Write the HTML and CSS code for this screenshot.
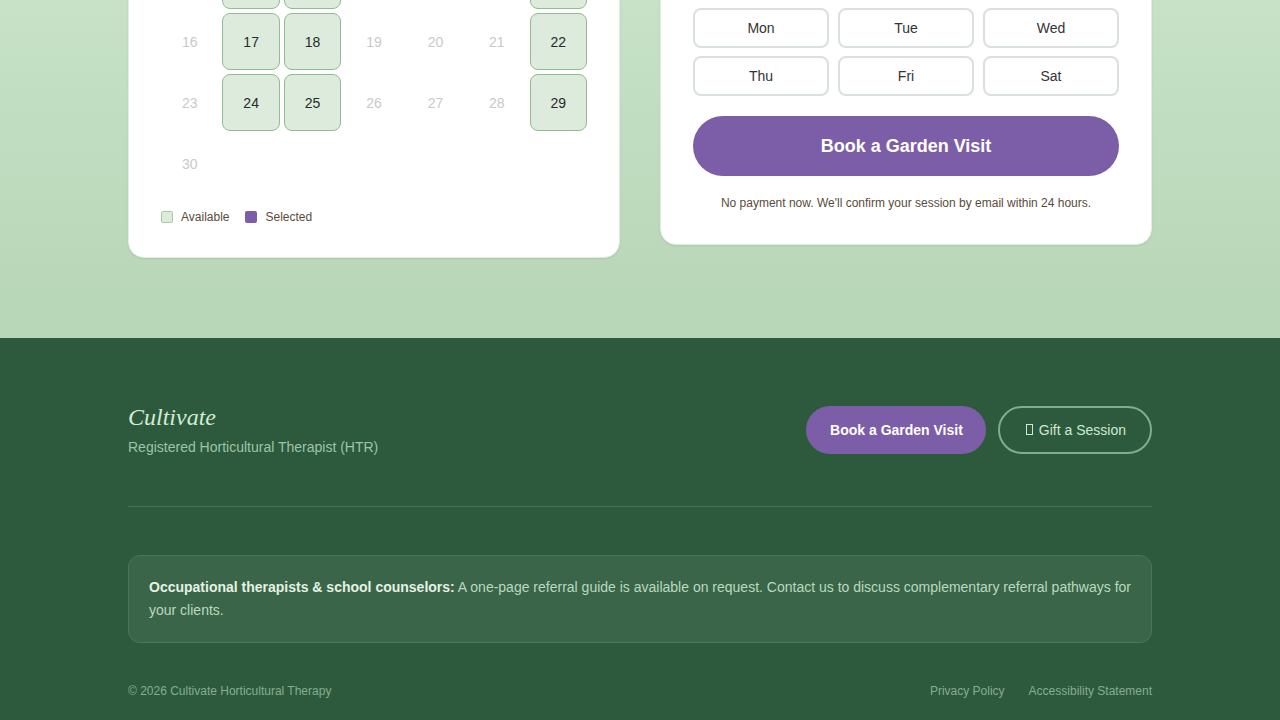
FILE: index.html
```html
<!DOCTYPE html>
<html lang="en">
<head>
<meta charset="utf-8">
<title>Cultivate — Book a Garden Visit</title>
<link rel="stylesheet" href="styles.css">
</head>
<body>
<section class="booking">
  <div class="container booking-grid">
    <div class="card calendar-card">
      <div class="cal-grid">
        <span class="day off"></span>
        <span class="day open"></span>
        <span class="day open"></span>
        <span class="day off"></span>
        <span class="day off"></span>
        <span class="day off"></span>
        <span class="day open"></span>
        <span class="day off">16</span>
        <span class="day open">17</span>
        <span class="day open">18</span>
        <span class="day off">19</span>
        <span class="day off">20</span>
        <span class="day off">21</span>
        <span class="day open">22</span>
        <span class="day off">23</span>
        <span class="day open">24</span>
        <span class="day open">25</span>
        <span class="day off">26</span>
        <span class="day off">27</span>
        <span class="day off">28</span>
        <span class="day open">29</span>
        <span class="day off">30</span>
      </div>
      <div class="legend">
        <span class="legend-item"><i class="swatch swatch-open"></i>Available</span>
        <span class="legend-item"><i class="swatch swatch-selected"></i>Selected</span>
      </div>
    </div>
    <div class="card form-card">
      <div class="weekdays">
        <button class="weekday">Mon</button>
        <button class="weekday">Tue</button>
        <button class="weekday">Wed</button>
        <button class="weekday">Thu</button>
        <button class="weekday">Fri</button>
        <button class="weekday">Sat</button>
      </div>
      <button class="book-btn">Book a Garden Visit</button>
      <p class="note">No payment now. We'll confirm your session by email within 24 hours.</p>
    </div>
  </div>
</section>
<footer class="footer">
  <div class="container">
    <div class="footer-top">
      <div class="brand">
        <div class="brand-name">Cultivate</div>
        <div class="brand-sub">Registered Horticultural Therapist (HTR)</div>
      </div>
      <div class="footer-actions">
        <a class="btn-primary" href="#">Book a Garden Visit</a>
        <a class="btn-outline" href="#"><span class="tofu"></span>Gift a Session</a>
      </div>
    </div>
    <hr class="divider">
    <p class="referral"><strong>Occupational therapists &amp; school counselors:</strong> A one-page referral guide is available on request. Contact us to discuss complementary referral pathways for your clients.</p>
    <div class="footer-bottom">
      <span>© 2026 Cultivate Horticultural Therapy</span>
      <nav class="footer-links">
        <a href="#">Privacy Policy</a>
        <a href="#">Accessibility Statement</a>
      </nav>
    </div>
  </div>
</footer>
</body>
</html>
```

FILE: styles.css
```css
* { box-sizing: border-box; }
html, body { margin: 0; padding: 0; }
body {
  font-family: "Liberation Sans", Arial, sans-serif;
  color: #333;
  background: #2d5a3d;
}
.container {
  width: 1024px;
  margin: 0 auto;
}
.booking {
  background: linear-gradient(180deg, #c7e2c7 0%, #b7d5b7 100%);
  overflow: hidden;
  height: 338px;
}
.booking-grid {
  display: grid;
  grid-template-columns: 1fr 1fr;
  gap: 40px;
  align-items: start;
  margin-top: -60px;
}
.card {
  background: #fff;
  border: 1px solid #e3eee3;
  border-radius: 16px;
  box-shadow: 0 1px 2px rgba(40, 80, 50, 0.12);
}
.calendar-card {
  padding: 11px 32px 32px;
}
.cal-grid {
  display: grid;
  grid-template-columns: repeat(7, 1fr);
  gap: 4px;
}
.day {
  height: 57px;
  display: flex;
  align-items: center;
  justify-content: center;
  font-size: 14px;
  border-radius: 8px;
  border: 1px solid transparent;
}
.day.off { color: #c9c9c9; }
.day.open {
  background: #dcebdc;
  border-color: #93bb93;
  color: #2a2a2a;
}
.legend {
  display: flex;
  gap: 16px;
  margin-top: 17px;
  font-size: 12px;
  color: #5b4a3c;
  line-height: 16px;
}
.legend-item {
  display: flex;
  align-items: center;
  gap: 8px;
}
.swatch {
  width: 12px;
  height: 12px;
  border-radius: 2px;
  display: inline-block;
}
.swatch-open { background: #dcebdc; border: 1px solid #a9c8a9; }
.swatch-selected { background: #7b5ea7; }
.form-card {
  padding: 67px 32px 32px;
}
.weekdays {
  display: grid;
  grid-template-columns: repeat(3, 1fr);
  gap: 8px 9px;
}
.weekday {
  height: 40px;
  background: #fff;
  border: 2px solid #d9e0dd;
  border-radius: 8px;
  font-family: "Liberation Sans", Arial, sans-serif;
  font-size: 14px;
  color: #333;
}
.book-btn {
  display: block;
  width: 100%;
  height: 60px;
  margin-top: 20px;
  border: none;
  border-radius: 30px;
  background: #7b5ea7;
  color: #fff;
  font-family: "Liberation Sans", Arial, sans-serif;
  font-size: 18px;
  font-weight: 700;
}
.note {
  margin: 18px 0 0;
  text-align: center;
  font-size: 12px;
  line-height: 18px;
  color: #5b4a3c;
}
.footer {
  background: #2d5a3d;
  padding: 65px 0 24px;
}
.footer-top {
  display: flex;
  justify-content: space-between;
  align-items: center;
}
.brand-name {
  font-family: "Liberation Serif", "Times New Roman", serif;
  font-style: italic;
  font-size: 24px;
  line-height: 28px;
  color: #d3ecd3;
}
.brand-sub {
  margin-top: 7px;
  font-size: 14px;
  line-height: 18px;
  color: #9fc3a7;
}
.footer-actions {
  display: flex;
  gap: 12px;
}
.btn-primary, .btn-outline {
  height: 48px;
  display: inline-flex;
  align-items: center;
  border-radius: 24px;
  font-size: 14px;
  text-decoration: none;
}
.btn-primary {
  background: #7b5ea7;
  color: #fff;
  font-weight: 700;
  padding: 0 23px 0 24px;
}
.btn-outline {
  border: 2px solid #7fae8a;
  color: #cfe8d2;
  padding: 0 24px 0 26px;
}
.tofu {
  display: inline-block;
  width: 7px;
  height: 11px;
  border: 1px solid #cfe8d2;
  margin-right: 6px;
}
.divider {
  border: none;
  border-top: 1px solid #467456;
  margin: 50px 0 48px;
}
.referral {
  margin: 0;
  background: #3b6549;
  border: 1px solid #4b7558;
  border-radius: 12px;
  padding: 20px;
  font-size: 14px;
  line-height: 23px;
  color: #b9d9bf;
}
.referral strong { color: #e3f2e3; }
.footer-bottom {
  display: flex;
  justify-content: space-between;
  align-items: center;
  margin-top: 40px;
  font-size: 12px;
  line-height: 16px;
  color: #86ad90;
}
.footer-links {
  display: flex;
  gap: 24px;
}
.footer-links a {
  color: #86ad90;
  text-decoration: none;
}
```
